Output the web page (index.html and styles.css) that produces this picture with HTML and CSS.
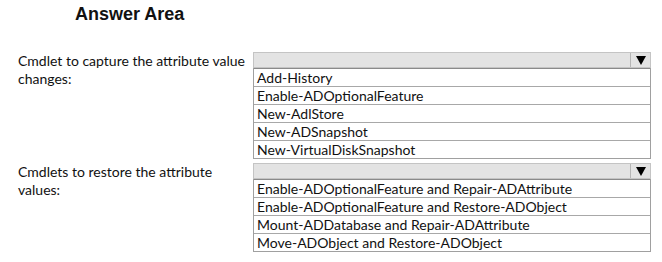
FILE: index.html
```html
<!DOCTYPE html>
<html>
<head>
<meta charset="utf-8">
<link rel="stylesheet" href="styles.css">
</head>
<body>
<main class="page">
  <h1 class="title">Answer Area</h1>
  <section class="q q1">
    <div class="label">Cmdlet to capture the attribute value<br>changes:</div>
    <div class="dd">
      <div class="dd-head"><span class="dd-btn"><span class="arrow"></span></span></div>
      <ul class="opts">
        <li>Add-History</li>
        <li>Enable-ADOptionalFeature</li>
        <li>New-AdlStore</li>
        <li>New-ADSnapshot</li>
        <li>New-VirtualDiskSnapshot</li>
      </ul>
    </div>
  </section>
  <section class="q q2">
    <div class="label">Cmdlets to restore the attribute<br>values:</div>
    <div class="dd">
      <div class="dd-head"><span class="dd-btn"><span class="arrow"></span></span></div>
      <ul class="opts">
        <li>Enable-ADOptionalFeature and Repair-ADAttribute</li>
        <li>Enable-ADOptionalFeature and Restore-ADObject</li>
        <li>Mount-ADDatabase and Repair-ADAttribute</li>
        <li>Move-ADObject and Restore-ADObject</li>
      </ul>
    </div>
  </section>
</main>
</body>
</html>
```
FILE: styles.css
```css
html, body {
  margin: 0;
  padding: 0;
  background: #ffffff;
}
.page {
  width: 662px;
  height: 262px;
  font-family: "Lato", "Open Sans", sans-serif;
  color: #111;
}
.title {
  margin: 0;
  padding: 3px 0 0 75px;
  font-family: "Liberation Sans", Arial, sans-serif;
  font-weight: bold;
  font-size: 18px;
  line-height: 22px;
  color: #111;
}
.q {
  display: grid;
  grid-template-columns: 235px 398px;
  padding-left: 18px;
}
.q1 {
  margin-top: 27px;
}
.q2 {
  margin-top: 4px;
}
.label {
  font-size: 14px;
  line-height: 18px;
  white-space: nowrap;
}
.dd {
  display: flex;
  flex-direction: column;
}
.dd-head {
  height: 16px;
  box-sizing: border-box;
  background: #e3e3e3;
  border: 1px solid #c4c4c4;
  display: flex;
  justify-content: flex-end;
}
.dd-btn {
  width: 19px;
  border-left: 1px solid #b5b5b5;
  display: flex;
  align-items: center;
  justify-content: center;
}
.arrow {
  width: 0;
  height: 0;
  border-left: 5px solid transparent;
  border-right: 5px solid transparent;
  border-top: 9px solid #000;
}
.opts {
  list-style: none;
  margin: 0;
  padding: 0;
  border: 1px solid #a0a0a0;
  border-top: none;
}
.opts li {
  height: 18px;
  box-sizing: border-box;
  border-top: 1px solid #a8a8a8;
  padding-left: 3px;
  font-size: 14px;
  line-height: 17px;
  white-space: nowrap;
}
.opts li:first-child {
  border-top: 1px solid #8a8a8a;
}
```
